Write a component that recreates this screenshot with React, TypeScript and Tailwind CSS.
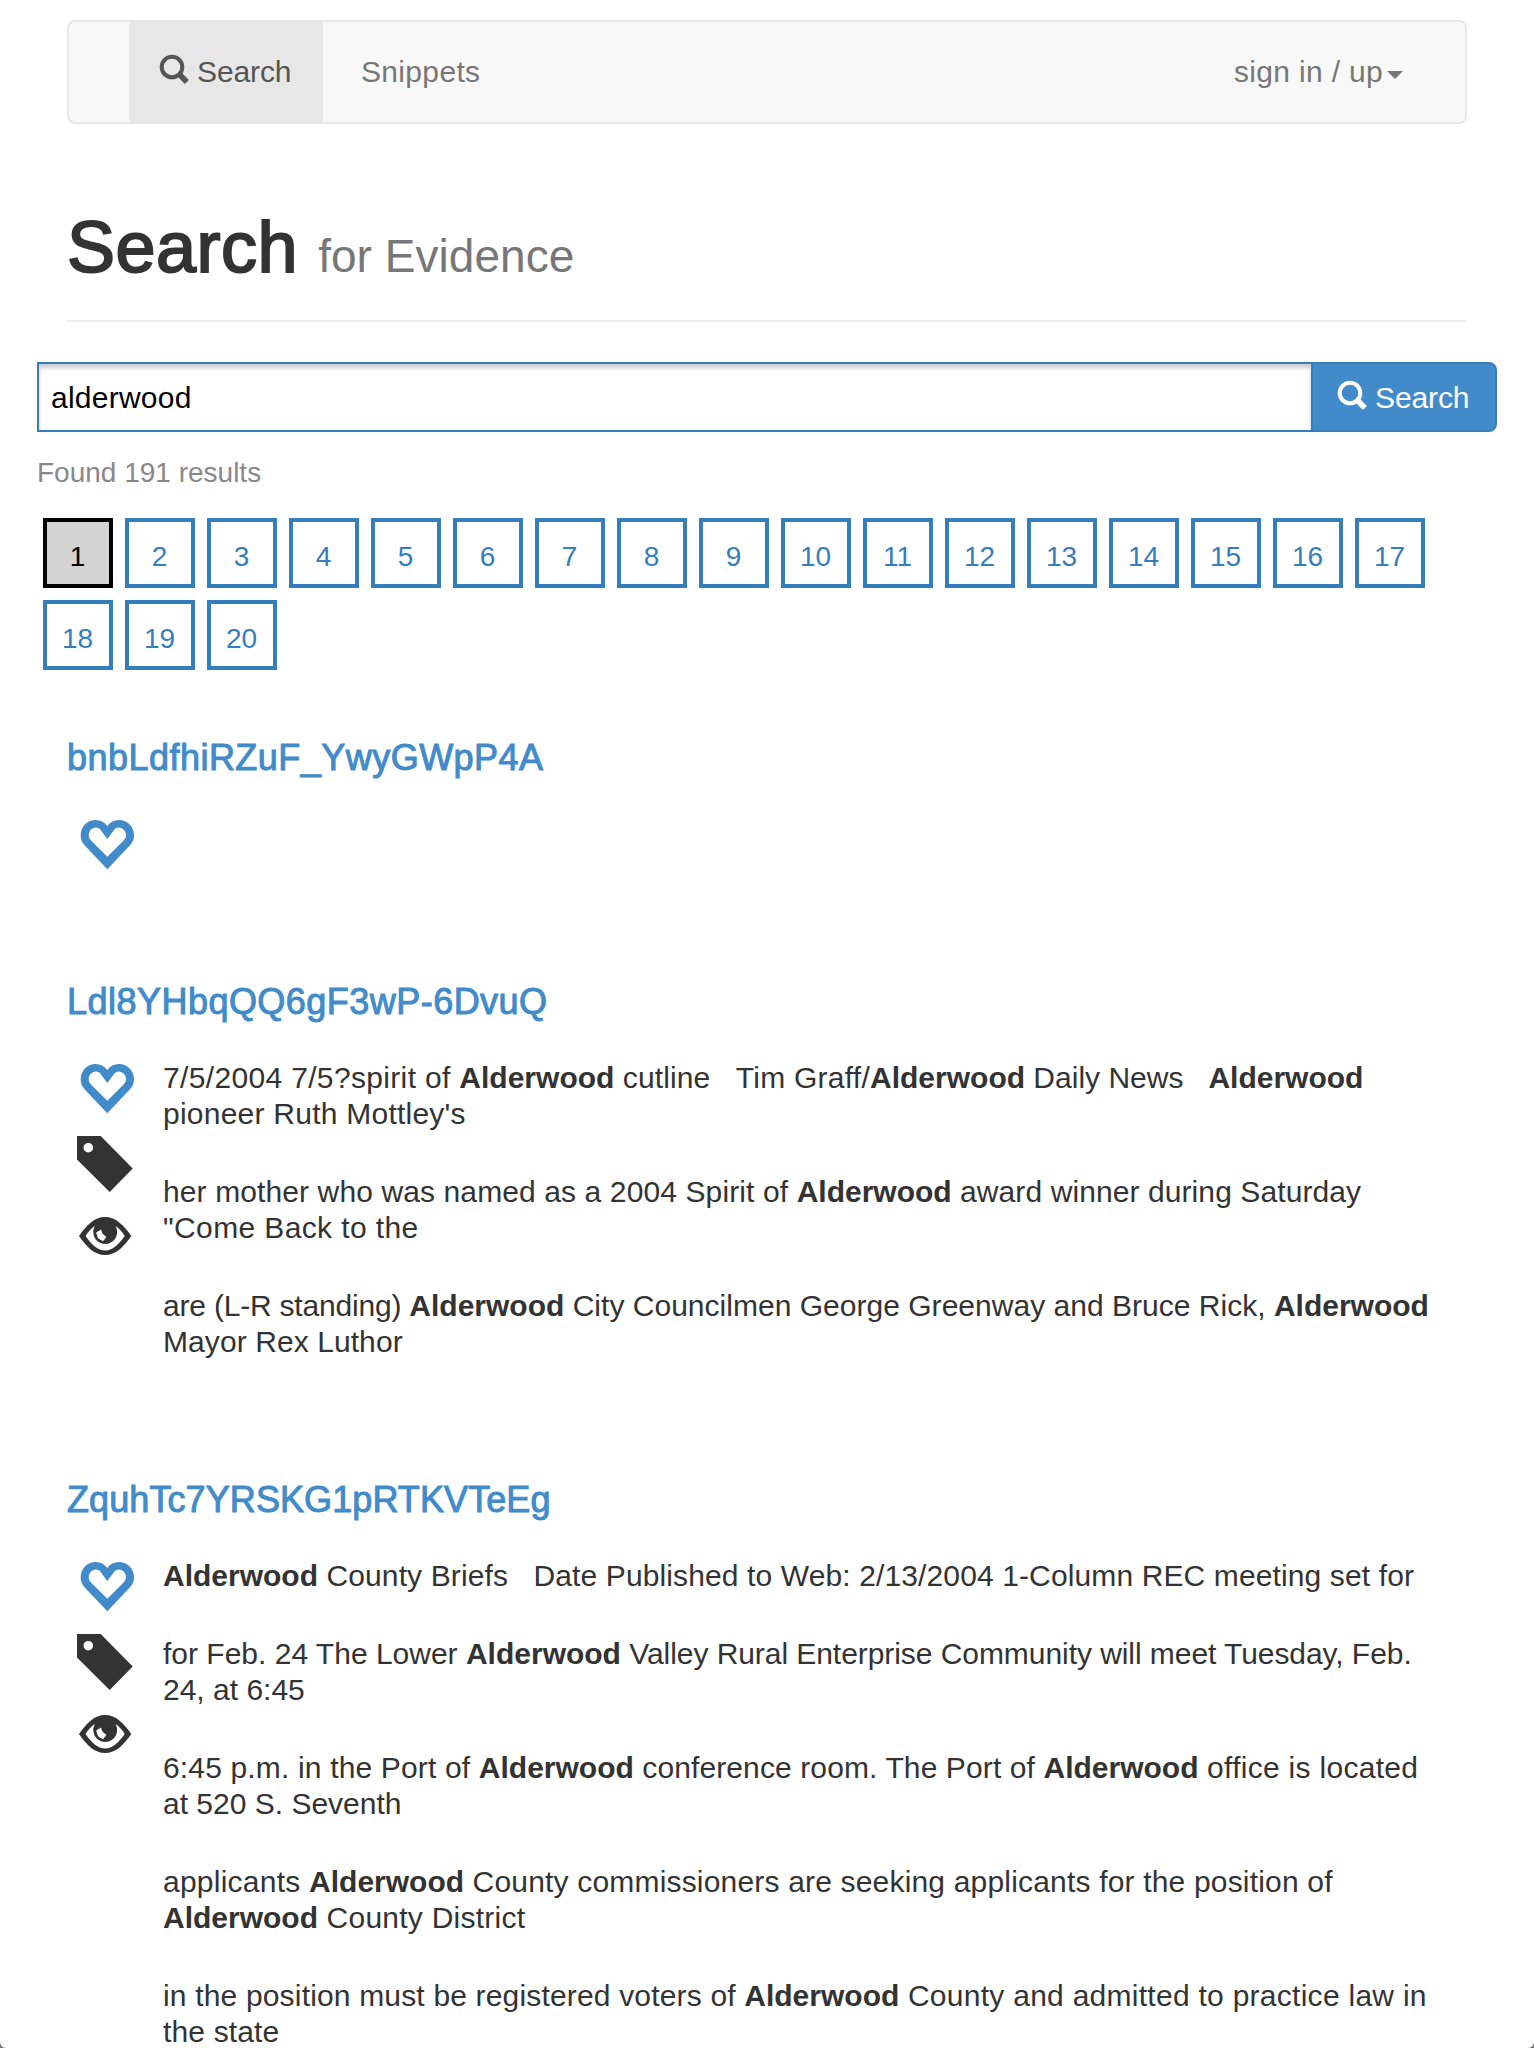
import React from "react";

const K = () => <b className="font-bold tracking-normal">Alderwood</b>;
const S = "\u00a0\u00a0 ";

const SearchIcon = () => (
  <svg width="32" height="32" viewBox="0 0 32 32" fill="none" stroke="currentColor" className="shrink-0">
    <circle cx="14" cy="14" r="10.3" strokeWidth="4" />
    <path d="M21 21L28.9 28.9" strokeWidth="5.6" />
  </svg>
);

const Heart = () => (
  <svg width="54" height="50" viewBox="0 0 54 50" fill="#428bca" fillRule="evenodd" className="ml-[13px] mt-[8px]">
    <path d="M27.3 6C24.5 2 20.5 0 15.6 0C7 0 .7 6.7 .7 15.2C.7 19 1.6 22 4.5 25.2L27.3 49.3L50 25.2C53 22 54 19 54 15.2C54 6.7 47.5 0 39 0C34 0 30 2 27.3 6ZM27.3 19L21 10.5C19.5 8.5 18 7.6 15.8 7.6C11.5 7.6 8.7 11.5 8.7 15.2C8.7 17.5 9.7 19 11 20.4L27.3 36.8L43.6 20.4C45 19 46 17.5 46 15.2C46 11.5 43 7.6 38.8 7.6C36.6 7.6 35 8.6 33.7 10.5Z" />
  </svg>
);

const Tag = () => (
  <svg width="57" height="57" viewBox="0 0 57 57" fill="#333" fillRule="evenodd" className="ml-[10px] mt-[22px]">
    <path d="M0 0H23.7L55.7 32.5L32.7 56L0 23.5ZM11.3 6.9A4.8 4.8 0 1 0 11.3 16.5A4.8 4.8 0 1 0 11.3 6.9Z" />
  </svg>
);

const Eye = () => (
  <svg width="53" height="38" viewBox="0 0 53 38" className="ml-[12px] mt-[24px]">
    <path fill="#333" d="M0 19C7.5 8 15.5 0 26.1 0C36.7 0 44.7 8 52.3 19C44.7 30 36.7 38 26.1 38C15.5 38 7.5 30 0 19Z" />
    <path fill="#fff" d="M6.6 19C9 15 12 11.5 15.8 9H36.5C40.3 11.5 43.3 15 45.7 19C40 27.5 33 33.5 26.1 33.5C19 33.5 12 27.5 6.6 19Z" />
    <circle cx="26.2" cy="15" r="11.9" fill="#333" />
    <path fill="#fff" d="M17.2 15.4L22 12.4L23.4 16.6L27.4 20L24 24.2L19 21.2Z" />
  </svg>
);

type Entry = { id: string; track: string; height: string; snippets: React.ReactNode[] };

const entries: Entry[] = [
  { id: "bnbLdfhiRZuF_YwyGWpP4A", track: "tracking-[0.47px]", height: "h-[244px]", snippets: [] },
  {
    id: "Ldl8YHbqQQ6gF3wP-6DvuQ",
    track: "tracking-[0.47px]",
    height: "h-[498px]",
    snippets: [
      <>
        <span className="tracking-[0.34px]">7/5/2004 7/5?spirit of </span><K />
        <span className="tracking-[0.12px]"> cutline{S}</span>
        <span className="tracking-[0.26px]">Tim Graff/</span><K /> Daily News{S}<K /><br />
        <span className="tracking-[0.24px]">pioneer Ruth Mottley's</span>
      </>,
      <>
        <span className="tracking-[0.11px]">her mother who was named as a 2004 Spirit of </span><K />
        <span className="tracking-[0.09px]"> award winner during Saturday</span><br />
        <span className="tracking-[0.38px]">"Come Back to the</span>
      </>,
      <>
        <span className="tracking-[-0.2px]">are (L-R standing) </span><K />
        <span className="tracking-[0.02px]"> City Councilmen George Greenway and Bruce Rick, </span><K /><br />
        <span className="tracking-[0.08px]">Mayor Rex Luthor</span>
      </>,
    ],
  },
  {
    id: "ZquhTc7YRSKG1pRTKVTeEg",
    track: "tracking-[0.09px]",
    height: "h-[568px]",
    snippets: [
      <>
        <K />
        <span className="tracking-[0.12px]"> County Briefs{S}Date Published to Web: 2/13/2004 1-Column REC meeting set for</span>
      </>,
      <>
        for Feb. 24 The Lower <K />
        <span className="tracking-[-0.06px]"> Valley Rural Enterprise Community will meet Tuesday, Feb.</span><br />
        24, at 6:45
      </>,
      <>
        <span className="tracking-[0.16px]">6:45 p.m. in the Port of </span><K />
        <span className="tracking-[0.11px]"> conference room. The Port of </span><K />
        <span className="tracking-[0.29px]"> office is located</span><br />
        at 520 S. Seventh
      </>,
      <>
        <span className="tracking-[0.24px]">applicants </span><K />
        <span className="tracking-[0.18px]"> County commissioners are seeking applicants for the position of</span><br />
        <K /><span className="tracking-[0.24px]"> County District</span>
      </>,
      <>
        <span className="tracking-[0.17px]">in the position must be registered voters of </span><K />
        <span className="tracking-[0.27px]"> County and admitted to practice law in</span><br />
        <span className="tracking-[0.15px]">the state</span>
      </>,
    ],
  },
];

export default function App() {
  return (
    <div className="h-[2048px] w-[1534px] overflow-hidden bg-[#777]">
      <div className="h-full overflow-hidden rounded-b-[6px] bg-white pt-5 font-['Liberation_Sans',Arial,sans-serif] text-[30px] leading-9 text-[#333]">
        <nav className="mx-[67px] flex h-[104px] items-stretch rounded-lg border-2 border-[#e7e7e7] bg-[#f8f8f8] pl-[60px] text-[#777]">
          <a className="flex w-[194px] items-center bg-[#e7e7e7] pl-[29px] text-[#555]">
            <span className="-mt-1.5"><SearchIcon /></span>
            <span className="ml-[7px] tracking-[-0.1px]">Search</span>
          </a>
          <a className="flex items-center pl-[38px] tracking-[0.33px]">Snippets</a>
          <a className="ml-auto mr-[62px] flex items-center tracking-[0.33px]">
            sign in / up
            <span className="ml-1 mt-1.5 border-x-8 border-t-8 border-x-transparent border-t-[#777]" />
          </a>
        </nav>

        <header className="mx-[67px] flex h-[198px] items-baseline border-b-2 border-[#eee] pt-[83px]">
          <h1 className="text-[72px] leading-[80px] tracking-[0.5px] [-webkit-text-stroke:2px_#333]">Search</h1>
          <small className="ml-[20px] text-[46px] leading-[80px] tracking-[0.05px] text-[#777]">for Evidence</small>
        </header>

        <div className="mx-[37px] mt-10 flex h-[70px]">
          <div className="flex flex-1 items-center border-2 border-r-0 border-[#357ebd] pl-3 pt-0.5 tracking-[0.25px] text-black shadow-[inset_0_4px_4px_rgba(0,0,0,0.2)]">
            alderwood
          </div>
          <button className="flex w-[186px] items-center rounded-r-lg border-2 border-[#357ebd] bg-[#428bca] pl-[23px] text-white">
            <span className="-mt-1"><SearchIcon /></span>
            <span className="ml-[7px] mt-0.5 tracking-[-0.1px]">Search</span>
          </button>
        </div>

        <p className="ml-[37px] mt-[23px] text-[28px] text-[#888]">Found 191 results</p>

        <div className="ml-[43px] mt-[27px] flex w-[1420px] flex-wrap gap-3 text-[28px]">
          {Array.from({ length: 20 }, (_, i) => (
            <a
              key={i}
              className={
                i === 0
                  ? "flex size-[70px] items-center justify-center border-4 border-black bg-[#d3d3d3] pr-px pt-[7px] text-black"
                  : "flex size-[70px] items-center justify-center border-4 border-[#357ebd] pr-px pt-[7px] text-[#357ebd]"
              }
            >
              {i + 1}
            </a>
          ))}
        </div>

        <main className="ml-[67px] mt-[68px]">
          {entries.map((e) => (
            <article key={e.id} className={e.height}>
              <h3 className={`h-[74px] text-[36px] leading-10 text-[#428bca] ${e.track}`}>
                <span className="[-webkit-text-stroke:1px_#428bca]">{e.id}</span>
              </h3>
              <div className="flex">
                <div className="flex w-24 shrink-0 flex-col">
                  <Heart />
                  {e.snippets.length > 0 && <Tag />}
                  {e.snippets.length > 0 && <Eye />}
                </div>
                <div className="mt-1 flex flex-col gap-[42px] whitespace-nowrap">
                  {e.snippets.map((s, i) => (
                    <p key={i}>{s}</p>
                  ))}
                </div>
              </div>
            </article>
          ))}
        </main>
      </div>
    </div>
  );
}
